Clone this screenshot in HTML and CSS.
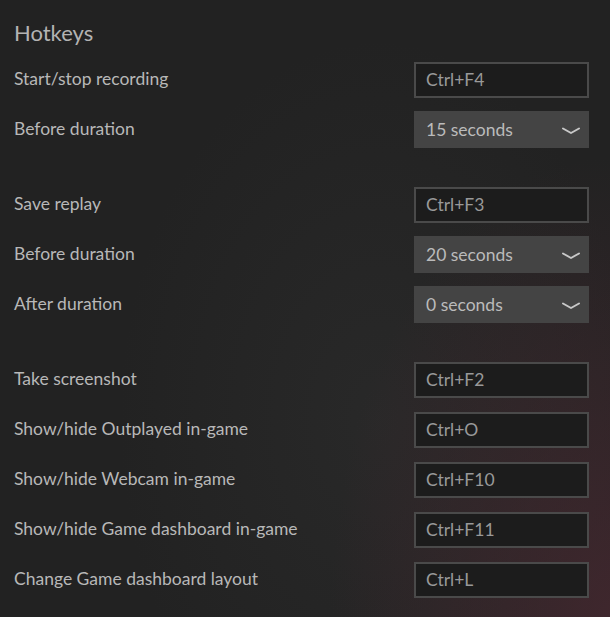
FILE: index.html
```html
<!DOCTYPE html>
<html>
<head>
<meta charset="utf-8">
<link rel="stylesheet" href="styles.css">
</head>
<body>
<div class="panel">
  <h1 class="title">Hotkeys</h1>
  <div class="group">
    <div class="row"><span class="label">Start/stop recording</span><div class="key">Ctrl+F4</div></div>
    <div class="row"><span class="label">Before duration</span><div class="select"><span>15 seconds</span><svg class="chev" width="18" height="8" viewBox="0 0 18 8"><path d="M1 1.5 L9 6 L17 1.5" fill="none" stroke="#c8c8c8" stroke-width="2" stroke-linecap="round" stroke-linejoin="round"/></svg></div></div>
  </div>
  <div class="group">
    <div class="row"><span class="label">Save replay</span><div class="key">Ctrl+F3</div></div>
    <div class="row"><span class="label">Before duration</span><div class="select"><span>20 seconds</span><svg class="chev" width="18" height="8" viewBox="0 0 18 8"><path d="M1 1.5 L9 6 L17 1.5" fill="none" stroke="#c8c8c8" stroke-width="2" stroke-linecap="round" stroke-linejoin="round"/></svg></div></div>
    <div class="row"><span class="label">After duration</span><div class="select"><span>0 seconds</span><svg class="chev" width="18" height="8" viewBox="0 0 18 8"><path d="M1 1.5 L9 6 L17 1.5" fill="none" stroke="#c8c8c8" stroke-width="2" stroke-linecap="round" stroke-linejoin="round"/></svg></div></div>
  </div>
  <div class="group">
    <div class="row"><span class="label">Take screenshot</span><div class="key">Ctrl+F2</div></div>
    <div class="row"><span class="label">Show/hide Outplayed in-game</span><div class="key">Ctrl+O</div></div>
    <div class="row"><span class="label">Show/hide Webcam in-game</span><div class="key">Ctrl+F10</div></div>
    <div class="row"><span class="label">Show/hide Game dashboard in-game</span><div class="key">Ctrl+F11</div></div>
    <div class="row"><span class="label">Change Game dashboard layout</span><div class="key">Ctrl+L</div></div>
  </div>
</div>
</body>
</html>
```

FILE: styles.css
```css
html, body {
  margin: 0;
  padding: 0;
  height: 100%;
}
body {
  background:
    radial-gradient(ellipse 280px 460px at 100% 100%, rgba(70, 40, 48, 0.8), rgba(70, 40, 48, 0) 100%),
    radial-gradient(ellipse 260px 380px at 62% 68%, rgba(64, 64, 64, 0.22), rgba(64, 64, 64, 0) 100%),
    #222222;
  font-family: Lato, "Open Sans", sans-serif;
  overflow: hidden;
}
.panel {
  padding: 20px 21px 0 14px;
}
.title {
  margin: 0 0 15px 0;
  font-size: 22px;
  line-height: 26px;
  font-weight: 400;
  color: #b3b3b3;
}
.group {
  display: flex;
  flex-direction: column;
  gap: 13px;
  margin-bottom: 38px;
}
.row {
  display: flex;
  align-items: center;
  justify-content: space-between;
  height: 37px;
}
.label {
  font-size: 17.5px;
  line-height: 20px;
  margin-top: -1px;
  color: #b8b8b8;
}
.key {
  box-sizing: border-box;
  width: 175px;
  height: 36px;
  border: 2px solid #4a4a4a;
  background: #1c1c1c;
  padding-left: 10px;
  display: flex;
  align-items: center;
  font-size: 17.5px;
  color: #999999;
}
.select {
  box-sizing: border-box;
  width: 175px;
  height: 37px;
  background: #444444;
  padding: 0 9px 0 12px;
  display: flex;
  align-items: center;
  justify-content: space-between;
  font-size: 17.5px;
  color: #bbbbbb;
}
.chev {
  display: block;
  margin-top: 2px;
}
```
